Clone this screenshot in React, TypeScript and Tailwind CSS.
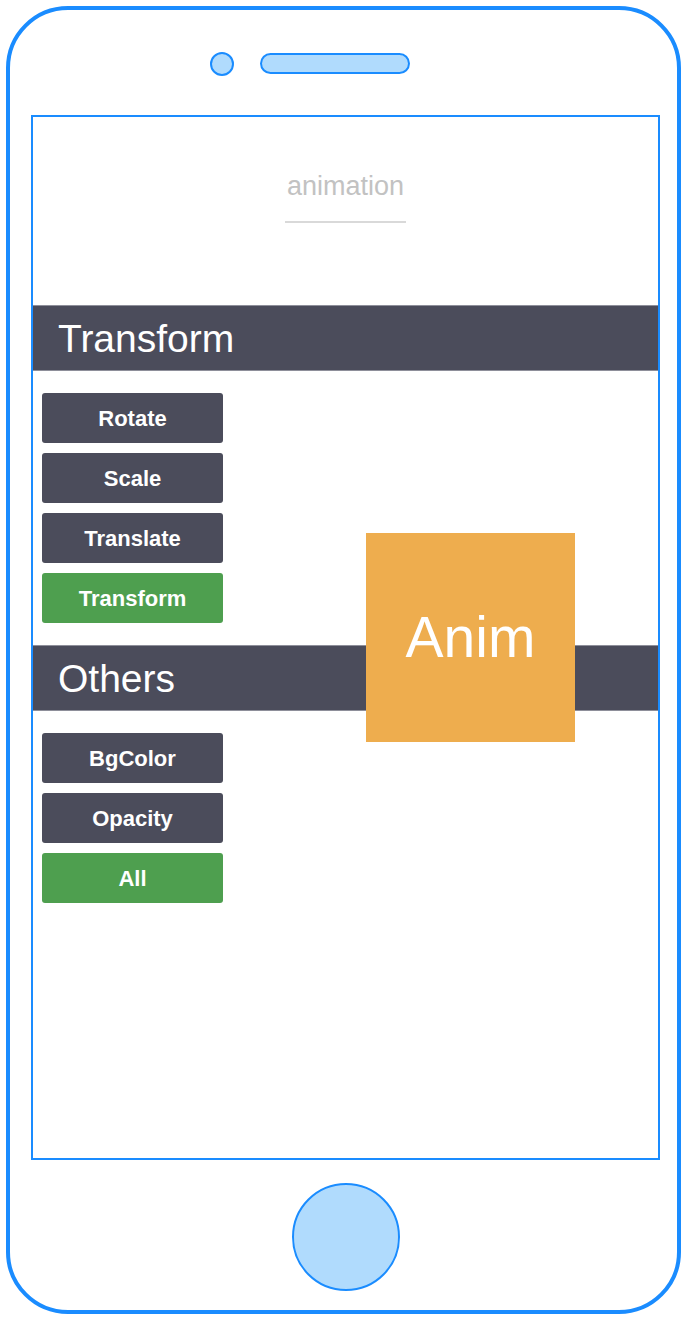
import React from "react";

const transformButtons = [
    { label: "Rotate", active: false },
    { label: "Scale", active: false },
    { label: "Translate", active: false },
    { label: "Transform", active: true },
];

const otherButtons = [
    { label: "BgColor", active: false },
    { label: "Opacity", active: false },
    { label: "All", active: true },
];

type Btn = { label: string; active: boolean };

const SectionHeader: React.FC<{ title: string }> = ({ title }) => (
    <div className="h-[66px] bg-[#4b4c5b] border-y border-[#8e8f9a] pl-[25px] text-[39px] leading-[66px] text-white">
        {title}
    </div>
);

const ButtonList: React.FC<{ items: Btn[] }> = ({ items }) => (
    <div className="flex flex-col gap-[10px] pl-[9px] py-[22px]">
        {items.map(item => (
            <button
                key={item.label}
                className={
                    "w-[181px] h-[50px] rounded-[3px] text-white font-bold text-[22px] leading-[52px] text-center " +
                    (item.active ? "bg-[#4e9f4f]" : "bg-[#4b4c5b]")
                }
            >
                {item.label}
            </button>
        ))}
    </div>
);

export default function App() {
    return (
        <div className="w-[685px] h-[1321px] bg-white pt-[6px] pl-[6px]" style={{ fontFamily: '"Liberation Sans", Arial, sans-serif' }}>
            <div className="w-[675px] h-[1308px] border-4 border-[#1a8cff] rounded-[62px] flex flex-col">
                {/* camera + speaker */}
                <div className="flex items-center h-[24px] mt-[42px] pl-[200px] gap-[26px]">
                    <div className="w-[24px] h-[24px] rounded-full border-2 border-[#1a8cff] bg-[#b0dbfd]" />
                    <div className="w-[150px] h-[21px] -mt-[2px] rounded-full border-2 border-[#1a8cff] bg-[#b0dbfd]" />
                </div>

                {/* screen */}
                <div className="relative ml-[21px] mt-[39px] w-[629px] h-[1045px] border-2 border-[#1a8cff]">
                    <div className="flex justify-center pt-[54px]">
                        <div className="px-[2px] pb-[19px] border-b-2 border-[#d9d9d9] text-[27px] leading-[31px] text-[#c2c2c2]">
                            animation
                        </div>
                    </div>
                    <div className="mt-[82px]">
                        <SectionHeader title="Transform" />
                        <ButtonList items={transformButtons} />
                        <SectionHeader title="Others" />
                        <ButtonList items={otherButtons} />
                    </div>

                    <div className="absolute left-[333px] top-[416px] w-[209px] h-[209px] bg-[#eead4e] flex items-center justify-center text-white text-[57px]">
                        Anim
                    </div>
                </div>

                {/* home button */}
                <div className="flex justify-center mt-[23px] pl-[4px]">
                    <div className="w-[108px] h-[108px] rounded-full border-2 border-[#1a8cff] bg-[#b0dbfd]" />
                </div>
            </div>
        </div>
    );
}
